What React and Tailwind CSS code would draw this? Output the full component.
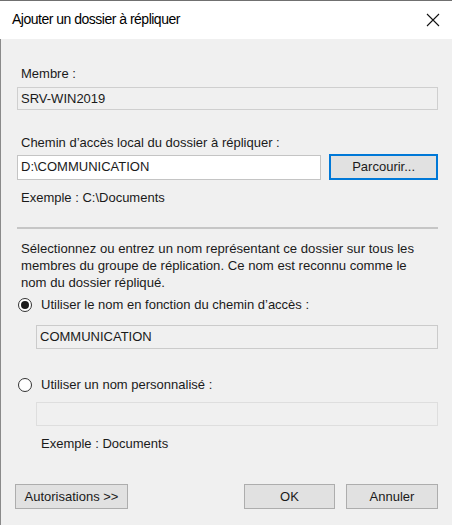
export default function App() {
  const font = { fontFamily: '"Liberation Sans", Arial, sans-serif' };
  return (
    <div className="w-[452px] h-[525px] bg-[#f0f0f0] flex flex-col overflow-hidden text-[13px] text-[#1a1a1a]" style={font}>
      <div className="h-[39px] shrink-0 bg-white border-t border-[#707070] flex items-center justify-between pl-[12px] pr-[11px]">
        <span className="text-[14px] tracking-[-0.5px] text-black pb-[1px]">Ajouter un dossier à répliquer</span>
        <svg width="14" height="14" viewBox="0 0 14 14" className="mr-[1px]">
          <path d="M1 1 L13 13 M13 1 L1 13" stroke="#111" strokeWidth="1.1" fill="none" />
        </svg>
      </div>
      <div className="flex-1 flex flex-col border-l border-[#8a8a8a] pl-[16px] pr-[14px]">
        <div className="mt-[27px] pl-[4px] h-[16px] leading-[16px]">Membre :</div>
        <div className="mt-[5px] h-[23px] border border-[#cfcfcf] bg-[#f0f0f0] flex items-center pl-[3px]">SRV-WIN2019</div>

        <div className="mt-[25px] pl-[4px] h-[16px] leading-[16px]">Chemin d’accès local du dossier à répliquer :</div>
        <div className="mt-[3px] flex items-center h-[26px]">
          <div className="w-[305px] h-[25px] bg-white border border-[#c4c4c4] flex items-center pl-[3px]">D:\COMMUNICATION</div>
          <div className="ml-[8px] w-[109px] h-[26px] border-2 border-[#0078d7] bg-[#e1e1e1] flex items-center justify-center">Parcourir...</div>
        </div>
        <div className="mt-[10px] pl-[4px] h-[16px] leading-[16px]">Exemple : C:\Documents</div>
        <div className="mt-[21px] h-[2px] bg-[#c6c6c6]"></div>

        <div className="mt-[11px] pl-[4px] leading-[17px] text-[13.15px]">
          Sélectionnez ou entrez un nom représentant ce dossier sur tous les<br />
          membres du groupe de réplication. Ce nom est reconnu comme le<br />
          nom du dossier répliqué.
        </div>
        <div className="mt-[6px] flex items-center h-[16px]">
          <div className="w-[14px] h-[14px] rounded-full border border-[#333] bg-white flex items-center justify-center ml-[1px]">
            <div className="w-[8px] h-[8px] rounded-full bg-[#1a1a1a]"></div>
          </div>
          <span className="ml-[9px]">Utiliser le nom en fonction du chemin d’accès :</span>
        </div>
        <div className="mt-[12px] ml-[19px] h-[24px] border border-[#cbcbcb] bg-[#f0f0f0] flex items-center pl-[3px]">COMMUNICATION</div>

        <div className="mt-[28px] flex items-center h-[16px]">
          <div className="w-[14px] h-[14px] rounded-full border border-[#333] bg-white ml-[1px]"></div>
          <span className="ml-[9px]">Utiliser un nom personnalisé :</span>
        </div>
        <div className="mt-[9px] ml-[19px] h-[24px] border border-[#dedede] bg-[#f0f0f0]"></div>
        <div className="mt-[10px] ml-[24px] h-[16px] leading-[16px]">Exemple : Documents</div>

        <div className="mt-[32px] flex items-center h-[25px]">
          <div className="-ml-[2px] w-[113px] h-[25px] border border-[#adadad] bg-[#e1e1e1] flex items-center justify-center">Autorisations &gt;&gt;</div>
          <div className="ml-auto w-[91px] h-[25px] border border-[#adadad] bg-[#e1e1e1] flex items-center justify-center">OK</div>
          <div className="ml-[11px] mr-[0px] w-[92px] h-[25px] border border-[#adadad] bg-[#e1e1e1] flex items-center justify-center">Annuler</div>
        </div>
      </div>
    </div>
  );
}
